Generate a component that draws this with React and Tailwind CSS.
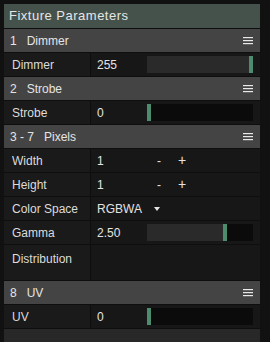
import React from "react";

const Burger = () => (
  <svg width="10" height="9" viewBox="0 0 10 9" className="mr-[7px]">
    <rect x="0" y="1" width="10" height="1.2" fill="#e8e8e8" />
    <rect x="0" y="4" width="10" height="1.2" fill="#e8e8e8" />
    <rect x="0" y="7" width="10" height="1.2" fill="#e8e8e8" />
  </svg>
);

const GroupHeader = ({ num, name }) => (
  <div className="flex h-[23px] items-center justify-between bg-[#444444]">
    <div className="flex items-center pl-1.5 text-[#e4e4e4]">
      <span>{num}</span>
      <span className="ml-[10px]">{name}</span>
    </div>
    <Burger />
  </div>
);

const Slider = ({ pct }) => (
  <div className="ml-auto mr-[7px] flex h-[17px] w-[106px] bg-[#0b0b0b]">
    <div className="h-full bg-[#2a2a2a]" style={{ width: `${pct}%` }} />
    <div className="h-full w-[4px] bg-[#4e8c70] -ml-[4px]" style={{ marginLeft: pct === 0 ? 0 : undefined }} />
  </div>
);

const Row = ({ label, tall, children }) => (
  <div className={`flex gap-px ${tall ? "h-[35px]" : "h-[23px]"}`}>
    <div
      className={`w-[86px] bg-[#1a1a1a] pl-2 text-[#dcdcdc] flex ${
        tall ? "items-start pt-[5px]" : "items-center"
      }`}
    >
      {label}
    </div>
    <div className="flex flex-1 items-center bg-[#171717] pl-1.5 text-[#e4e4e4]">
      {children}
    </div>
  </div>
);

const Stepper = ({ value }) => (
  <>
    <span className="w-[60px]">{value}</span>
    <span>-</span>
    <span className="ml-[17px] text-[14px]">+</span>
  </>
);

export default function App() {
  return (
    <div
      className="h-[342px] w-[270px] overflow-hidden bg-[#111111] pl-1 pr-[10px] pt-1 text-[12px]"
      style={{ fontFamily: '"Liberation Sans", Arial, sans-serif' }}
    >
      <div className="flex flex-col gap-px bg-[#0e0e0e]">
        <div className="flex h-6 items-center bg-[#45524c] pl-[5px] text-[13px] tracking-[0.5px] text-[#e6e6e6]">
          Fixture Parameters
        </div>

        <GroupHeader num="1" name="Dimmer" />
        <Row label="Dimmer">
          <span>255</span>
          <Slider pct={100} />
        </Row>

        <GroupHeader num="2" name="Strobe" />
        <Row label="Strobe">
          <span>0</span>
          <Slider pct={0} />
        </Row>

        <GroupHeader num="3 - 7" name="Pixels" />
        <Row label="Width">
          <Stepper value="1" />
        </Row>
        <Row label="Height">
          <Stepper value="1" />
        </Row>
        <Row label="Color Space">
          <span>RGBWA</span>
          <svg width="6" height="4" viewBox="0 0 6 4" className="ml-[12px]">
            <polygon points="0,0 6,0 3,4" fill="#e4e4e4" />
          </svg>
        </Row>
        <Row label="Gamma">
          <span>2.50</span>
          <Slider pct={75} />
        </Row>
        <Row label="Distribution" tall />

        <GroupHeader num="8" name="UV" />
        <Row label="UV">
          <span>0</span>
          <Slider pct={0} />
        </Row>

        <div className="h-[14px] bg-[#282828]" />
      </div>
    </div>
  );
}
